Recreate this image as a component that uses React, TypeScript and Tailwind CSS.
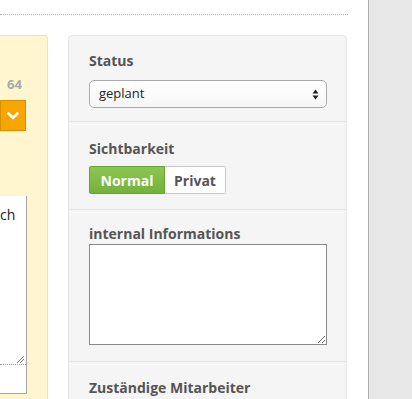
export default function App() {
  return (
    <div
      className="flex h-[399px] w-[412px] overflow-hidden bg-white"
      style={{ fontFamily: '"Open Sans", "Liberation Sans", sans-serif' }}
    >
      {/* main content column */}
      <div className="w-[368px] shrink-0 bg-white">
        <div className="h-[15px] w-[348px] border-b border-dotted border-[#b8b8b8]" />

        <div className="mt-[20px] flex items-start gap-[20px]">
          {/* yellow side panel (cut off on the left) */}
          <div className="h-[400px] w-[48px] shrink-0 rounded-tr-[4px] border-t border-r border-[#f6e3a8] bg-[#fff5cf]">
            <div className="mt-[40px] w-[26px] pl-[7px] text-[13px] font-bold leading-[16px] text-[#a9a9a9]">
              64
            </div>
            <div className="mt-[8px] flex h-[31px] w-[26px] items-center justify-center border border-[#d98e00] bg-[#f7a600]">
              <svg width="12" height="8" viewBox="0 0 12 8" fill="none">
                <path d="M1.5 1.5 6 6 10.5 1.5" stroke="white" strokeWidth="2.6" strokeLinecap="round" strokeLinejoin="round" />
              </svg>
            </div>
            <div className="mt-[65px] flex h-[198px] w-[27px] flex-col border-r border-b border-[#a5a5a5] bg-white">
              <div className="pt-[10px] text-[14px] leading-[18px] text-[#222]">ch</div>
              <div className="flex-1" />
              <div className="flex justify-end pr-[2px]">
                <svg width="8" height="8" viewBox="0 0 8 8">
                  <path d="M1 8 8 1M4 8 8 4" stroke="#777" strokeWidth="1" />
                </svg>
              </div>
              <div className="mt-[1px] border-t border-dotted border-[#999]" />
              <div className="h-[28px]" />
            </div>
          </div>

          {/* right form panel */}
          <div className="w-[279px] shrink-0 rounded-t-[4px] border border-[#e6e6e6] bg-[#f5f5f5]">
            <div className="border-b border-[#e4e4e4] px-[20px] pt-[15px] pb-[13px]">
              <div className="h-5 text-[14px] font-bold leading-5 text-[#555]">Status</div>
              <div className="mt-[9px] flex h-[28px] w-[238px] items-center justify-between rounded-[5px] border border-[#aaa] bg-gradient-to-b from-white to-[#f6f6f6] pl-[9px] pr-[7px]">
                <span className="text-[13px] text-[#222]">geplant</span>
                <svg width="7" height="11" viewBox="0 0 7 11">
                  <path d="M3.5 0.5 6.5 4.5H0.5Z M3.5 10.5 6.5 6.5H0.5Z" fill="#222" />
                </svg>
              </div>
            </div>

            <div className="border-b border-[#e4e4e4] px-[20px] pt-[17px] pb-[15px]">
              <div className="h-5 text-[14px] font-bold leading-5 text-[#555]">Sichtbarkeit</div>
              <div className="mt-[7px] flex h-[28px] w-fit">
                <div className="flex w-[76px] items-center justify-center rounded-l-[2px] border border-[#6aa533] bg-gradient-to-b from-[#8cc652] to-[#74b23c] text-[14px] font-bold text-white">
                  Normal
                </div>
                <div className="flex w-[61px] items-center justify-center rounded-r-[2px] border border-l-0 border-[#c8c8c8] bg-white text-[14px] font-bold text-[#555]">
                  Privat
                </div>
              </div>
            </div>

            <div className="border-b border-[#e4e4e4] px-[20px] pt-[14px] pb-[16px]">
              <div className="h-5 text-[14px] font-bold leading-5 text-[#555]">internal Informations</div>
              <textarea className="block h-[101px] w-[238px] border border-[#8a8a8a] bg-white outline-none" />
            </div>

            <div className="px-[20px] pt-[16px] pb-[20px]">
              <div className="h-5 text-[14px] font-bold leading-5 text-[#555]">Zuständige Mitarbeiter</div>
            </div>
          </div>
        </div>
      </div>

      <div className="w-px shrink-0 bg-[#acacac]" />
      <div className="flex-1 bg-[#e7e7e7]" />
    </div>
  );
}
